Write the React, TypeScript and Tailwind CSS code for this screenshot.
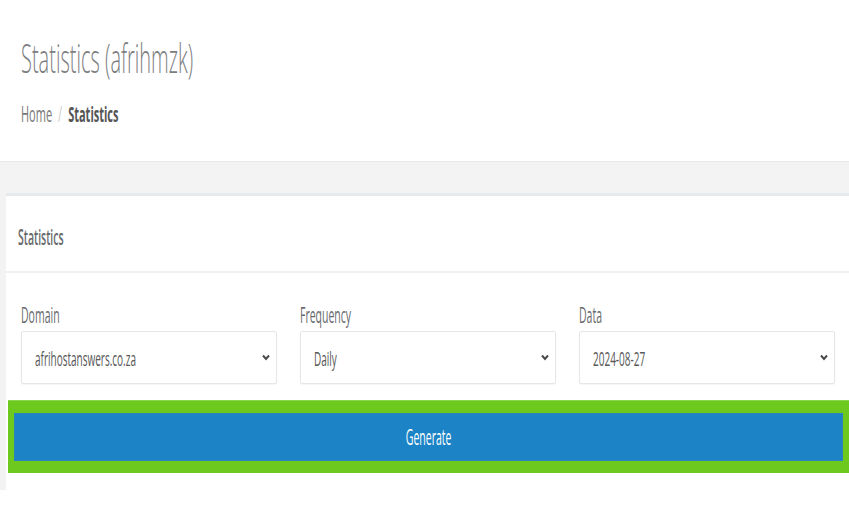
import { ReactNode } from 'react'

const squeeze = 'inline-block origin-left scale-x-50 whitespace-nowrap'

function Field({ label, value }: { label: string; value: string }) {
  return (
    <div>
      <div className="h-[21px] text-[21px] leading-[21px] text-[#676a6c] mt-[2px] mb-[5px]">
        <span className={squeeze}>{label}</span>
      </div>
      <div className="h-[53px] flex items-center justify-between pl-[13px] pr-[5px] pt-[3px] bg-white border border-[#e5e6e7] rounded-[2px] shadow-[0_1px_1px_rgba(0,0,0,0.04)]">
        <span className={`${squeeze} text-[20px] leading-[20px] text-[#585858]`}>{value}</span>
        <svg width="8" height="7" viewBox="0 0 8 7" className="shrink-0 mr-[1px] -mt-[3px]">
          <path d="M1 1.5 L4 5 L7 1.5" fill="none" stroke="#4a4a4a" strokeWidth="2" />
        </svg>
      </div>
    </div>
  )
}

function Crumbs({ children }: { children: ReactNode }) {
  return <div className="h-[22px] text-[22px] leading-[22px] origin-left scale-x-50 whitespace-nowrap">{children}</div>
}

export default function App() {
  return (
    <div className="w-[849px] h-[505px] overflow-hidden bg-white font-['Open_Sans','Liberation_Sans',sans-serif]">
      <header className="h-[161px] pl-[21px] pt-[38px]">
        <h1 className="h-[40px] text-[40px] leading-[40px] font-light text-[#7c7e80] origin-left scale-x-50 whitespace-nowrap">
          Statistics (afrihmzk)
        </h1>
        <div className="mt-[24px]">
          <Crumbs>
            <span className="text-[#777]">Home</span>
            <span className="mx-[12px] text-[#ccc]">/</span>
            <span className="font-bold text-[#555]">Statistics</span>
          </Crumbs>
        </div>
      </header>

      <section className="bg-[#f3f3f4] border-t border-[#e7e7e7] pt-[31px] pl-[6px]">
        <div className="w-[843px] bg-white border-t-[3px] border-[#e7eaec] pb-[17px]">
          <div className="h-[77px] pt-[31px] pl-[12px] border-b-2 border-[#f0f1f2]">
            <div className="h-[21px] text-[21px] leading-[21px] font-semibold text-[#676a6c]">
              <span className={squeeze}>Statistics</span>
            </div>
          </div>

          <div className="pt-[30px] pl-[15px] pr-[14px] grid grid-cols-3 gap-x-[23px]">
            <Field label="Domain" value="afrihostanswers.co.za" />
            <Field label="Frequency" value="Daily" />
            <Field label="Data" value="2024-08-27" />
          </div>

          <div className="mt-[16px] ml-[2px] bg-[#6dc91e] border-t border-[#8ad64a] pt-[12px] pb-[12px] px-[6px]">
            <button className="w-full h-[48px] flex items-center justify-center bg-[#1c83c6] border border-[#2a86b8] text-white text-[21px] leading-[21px]">
              <span className="inline-block scale-x-50 whitespace-nowrap">Generate</span>
            </button>
          </div>
        </div>
      </section>
    </div>
  )
}
